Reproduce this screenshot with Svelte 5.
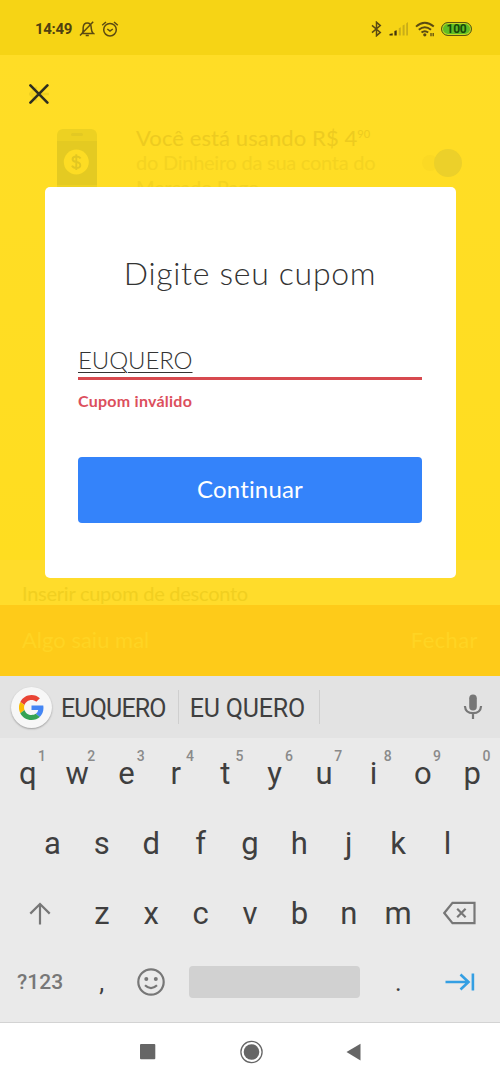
<script lang="ts">
	interface Key {
		label: string;
		hint?: string;
	}

	const toKeys = (letters: string): Key[] => letters.split('').map((label) => ({ label }));

	const topRow: Key[] = 'qwertyuiop'
		.split('')
		.map((label, i) => ({ label, hint: String((i + 1) % 10) }));
	const middleRow = toKeys('asdfghjkl');
	const bottomRow = toKeys('zxcvbnm');
	const suggestions = ['EUQUERO', 'EU QUERO'];

	let coupon = $state('EUQUERO');
	let invalid = $state(true);

	function press(label: string) {
		coupon += label.toUpperCase();
		invalid = false;
	}

	function erase() {
		coupon = coupon.slice(0, -1);
		invalid = false;
	}
</script>

{#snippet letterKey(key: Key)}
	<button class="key" onclick={() => press(key.label)}>
		{key.label}
		{#if key.hint}<span class="hint">{key.hint}</span>{/if}
	</button>
{/snippet}

<div class="screen">
	<header class="status">
		<span class="time">14:49</span>
		<svg class="bell" width="16" height="16" viewBox="0 0 16 16">
			<path d="M3.2 12.2C4.6 10.6 4 8.8 4.2 6.4C4.5 3.6 6 2 8.2 2S12 3.6 12.2 6.4C12.4 9 12.2 10.8 14.4 12.5H3M6.7 14.4H9.8M14.2 .8L1 14.6" />
		</svg>
		<svg class="alarm" width="18" height="16" viewBox="0 0 18 16">
			<circle cx="9" cy="8.7" r="6.3" />
			<path d="M1.2 4.2L5 1M16.8 4.2L13 1M6.3 8L9 10L11.8 8" />
		</svg>
		<div class="indicators">
			<svg width="11" height="16" viewBox="0 0 11 16">
				<path d="M1 4.4L9.3 11.4L5.5 14.8V1.2L9.3 4.6L1 11.6" />
			</svg>
			<svg class="bars" width="20" height="16" viewBox="0 0 20 16">
				<path d="M.5 14.5V13L3.7 12.2V14.5ZM5.4 14.5V10L7.7 9.2V14.5Z" />
				<path class="off" d="M9.8 14.5V7.2L11.8 6.2V14.5ZM13.6 14.5V4.6L15.6 3.4V14.5ZM17.2 14.5V2.5L19 1V14.5Z" />
			</svg>
			<svg class="wifi" width="20" height="16" viewBox="0 0 20 16">
				<path d="M1 5.6Q9.8-2 18.8 5.6M3.8 8.7Q9.8 3.6 16 8.7M6.5 11.5Q9.8 8.8 13.2 11.5" />
				<path class="small" d="M16 12V15.2M18.2 12V15.2" />
				<circle cx="9.8" cy="13.8" r="1.6" />
			</svg>
			<span class="battery">100</span>
		</div>
	</header>

	<main>
		<!-- Dimmed checkout page behind the dialog -->
		<div class="behind" aria-hidden="true">
			<div class="money">
				<svg width="40" height="70" viewBox="0 0 40 70">
					<rect width="40" height="70" rx="6" fill="#edd122" />
					<path d="M0 12H40V56H0Z" fill="#e4ca22" />
					<rect x="14" y="4" width="12" height="3" rx="1.5" fill="#e3c923" />
					<circle cx="19.3" cy="33" r="12.5" fill="#fddc24" />
					<path d="M23.5 29.5Q22.5 27.5 19.3 27.5Q15.6 27.5 15.6 30.2Q15.6 32.3 19.3 33Q23.3 33.7 23.3 36.2Q23.3 39 19.3 39Q16 39 15 36.6M19.3 25.3V41" fill="none" stroke="#e2c722" stroke-width="1.9" />
				</svg>
				<p>
					<span class="lead">Você está usando R$ 4<sup>90</sup></span>
					<span>do Dinheiro da sua conta do</span>
					<span>Mercado Pago.</span>
				</p>
				<i class="toggle"></i>
			</div>
			<div class="insert">Inserir cupom de desconto</div>
			<div class="snackbar"><span>Algo saiu mal</span><span class="dismiss">Fechar</span></div>
		</div>

		<button class="close" aria-label="Fechar">
			<svg width="20" height="20" viewBox="0 0 20 20">
				<path class="ghost" d="M1 10L7 4M1 10L7 16M1 10H19" />
				<path d="M1.4 1.4L18.4 18.6M18.4 1.4L1.4 18.6" />
			</svg>
		</button>

		<section class="dialog">
			<h1>Digite seu cupom</h1>
			<div class="field" class:invalid><span>{coupon}</span></div>
			<p class="error">{invalid ? 'Cupom inválido' : ''}</p>
			<button class="continue" onclick={() => (invalid = true)}><span>Continuar</span></button>
		</section>
	</main>

	<section class="keyboard">
		<div class="suggestions">
			<span class="google">
				<svg width="25" height="25" viewBox="0 0 48 48">
					<path fill="#e94435" d="M24 9.5c3.5 0 6.7 1.2 9.2 3.6l6.9-6.9C35.9 2.4 30.5 0 24 0 14.6 0 6.5 5.4 2.6 13.2l8 6.2C12.4 13.7 17.7 9.5 24 9.5z" />
					<path fill="#4486f4" d="M47 24.6c0-1.6-.2-3.2-.4-4.6H24v9h12.9c-.6 3-2.2 5.5-4.7 7.2l7.7 6C44.4 38 47 31.8 47 24.6z" />
					<path fill="#fabc05" d="M10.5 28.6a14.5 14.5 0 0 1 0-9.2l-8-6.2a24 24 0 0 0 0 21.6z" />
					<path fill="#34a353" d="M24 48c6.5 0 11.9-2.1 15.9-5.8l-7.7-6c-2.2 1.5-4.9 2.3-8.2 2.3-6.3 0-11.6-4.2-13.5-9.9l-8 6.2C6.5 42.6 14.6 48 24 48z" />
				</svg>
			</span>
			{#each suggestions as word}
				<button class="word" onclick={() => (coupon = word)}>{word}</button>
			{/each}
			<svg class="mic" width="20" height="26" viewBox="0 0 20 26">
				<rect x="6.2" y="0.5" width="7.6" height="16" rx="3.8" />
				<path d="M1.9 12C2.3 16.9 5.6 19.2 10 19.2S17.7 16.9 18.1 12M10 19V25" />
			</svg>
		</div>

		<div class="row">
			{#each topRow as key}{@render letterKey(key)}{/each}
		</div>
		<div class="row indented">
			{#each middleRow as key}{@render letterKey(key)}{/each}
		</div>
		<div class="row">
			<button class="key side" aria-label="Shift">
				<svg width="22" height="23" viewBox="0 0 22 23">
					<path d="M1.3 11.6L11 2L20.7 11.6M11 2V22.5" />
				</svg>
			</button>
			{#each bottomRow as key}{@render letterKey(key)}{/each}
			<button class="key side" aria-label="Apagar" onclick={erase}>
				<svg width="33" height="24" viewBox="0 0 33 24">
					<path d="M9.5 1.8H31.5V22.2H9.5L1.3 12ZM14.2 7.8L22.6 16.2M22.6 7.8L14.2 16.2" />
				</svg>
			</button>
		</div>
		<div class="row last">
			<button class="key side symbols">?123</button>
			<button class="key punctuation">,</button>
			<button class="key" aria-label="Emoji">
				<svg width="28" height="28" viewBox="0 0 28 28">
					<circle cx="14" cy="14" r="12.7" />
					<path d="M8 17.3Q14 23 20 17.3" />
					<circle class="eye" cx="9.3" cy="11" r="2" />
					<circle class="eye" cx="18.8" cy="11" r="2" />
				</svg>
			</button>
			<button class="key space" aria-label="Espaço"><i></i></button>
			<button class="key punctuation">.</button>
			<button class="key side enter" aria-label="Avançar">
				<svg width="32" height="20" viewBox="0 0 32 20">
					<path d="M1.5 10H24M16.5 2.5L24.5 10L16.5 17.5M28.9 1.5V18.5" />
				</svg>
			</button>
		</div>
	</section>

	<nav>
		<svg width="500" height="59" viewBox="0 0 500 59">
			<rect x="140" y="21" width="15.3" height="15.3" rx="1" />
			<circle cx="251.5" cy="29" r="10.6" class="ring" />
			<circle cx="251.5" cy="29" r="7.8" />
			<path d="M346.5 29L360.5 20.8V37.4Z" />
		</svg>
	</nav>
</div>

<style>
	:global(body) {
		margin: 0;
	}

	.screen {
		width: 500px;
		height: 1082px;
		display: flex;
		flex-direction: column;
		overflow: hidden;
		font-family: Roboto, sans-serif;
		background: #fff;
	}

	button {
		padding: 0;
		border: 0;
		background: none;
		font: inherit;
		color: inherit;
	}

	svg {
		display: block;
		flex: none;
	}

	.status {
		flex: none;
		box-sizing: border-box;
		display: flex;
		align-items: center;
		height: 55px;
		padding: 3px 28px 0 35px;
		background: #f6d415;
		color: #4f4010;
	}

	.status svg {
		fill: none;
		stroke: #5b4a12;
		stroke-width: 1.5;
	}

	.time {
		width: 44px;
		font-size: 15px;
		font-weight: 700;
		letter-spacing: -0.3px;
	}

	.alarm {
		margin-left: 6px;
	}

	.indicators {
		display: flex;
		align-items: center;
		margin-left: auto;
	}

	.indicators .bars {
		margin: 0 6px 0 7px;
		fill: #40330f;
		stroke: none;
	}

	.bars .off {
		fill: #c9ad18;
	}

	.indicators .wifi {
		margin-right: 6px;
		stroke-width: 1.9;
	}

	.wifi circle {
		fill: #5b4a12;
		stroke: none;
	}

	.wifi .small {
		stroke-width: 1.3;
	}

	.battery {
		box-sizing: border-box;
		width: 31px;
		height: 14px;
		border: 1.5px solid #5d5513;
		border-radius: 7px;
		background: #62bd24;
		box-shadow: inset 0 0 0 1px #c5d922;
		color: #174809;
		font-size: 12px;
		font-weight: 700;
		line-height: 12px;
		letter-spacing: -0.3px;
		text-align: center;
	}

	main {
		position: relative;
		flex: none;
		height: 621px;
		font-family: Lato, sans-serif;
	}

	.behind {
		position: absolute;
		inset: 0;
		display: flex;
		flex-direction: column;
		background: #ffdd24;
		color: #f1cf20;
	}

	.money {
		display: flex;
		flex: 1;
		padding: 74px 38px 0 57px;
		background: linear-gradient(#ffdd26, #ffdd20);
	}

	.money p {
		display: flex;
		flex-direction: column;
		flex: 1;
		margin: -4px 0 0 39px;
		font-size: 20px;
		font-weight: 400;
		line-height: 25px;
		letter-spacing: -0.25px;
		white-space: nowrap;
		color: #f4d321;
	}

	.money .lead {
		font-size: 22px;
		letter-spacing: 0.1px;
		color: #edcb20;
	}

	sup {
		font-size: 11px;
		line-height: 0;
		vertical-align: 8px;
	}

	.toggle {
		width: 28px;
		height: 28px;
		margin-top: 20px;
		border-radius: 50%;
		background: #ecd02a;
		box-shadow: -18px 0 0 -6px #fbd924;
	}

	.insert {
		box-sizing: border-box;
		height: 45px;
		padding: 21px 22px 0;
		background: #ffdc2b;
		font-size: 20px;
		line-height: 24px;
		letter-spacing: -0.25px;
		white-space: nowrap;
	}

	.snackbar {
		box-sizing: border-box;
		display: flex;
		justify-content: space-between;
		height: 71px;
		padding: 21px 22px 0;
		background: #fecb19;
		color: #ffd423;
		font-size: 22px;
		line-height: 28px;
	}

	.dismiss {
		letter-spacing: 0.4px;
	}

	.close {
		position: relative;
		display: block;
		padding: 29px 0 0 29px;
	}

	.close path {
		fill: none;
		stroke: #2f2e20;
		stroke-width: 2.6;
		stroke-linecap: round;
	}

	.close .ghost {
		stroke: #efd022;
	}

	.dialog {
		position: relative;
		box-sizing: border-box;
		width: 411px;
		height: 391px;
		margin: 83px 0 0 44.5px;
		padding: 66px 33.5px 0;
		border-radius: 5px;
		background: #fff;
		color: #333;
	}

	h1 {
		margin: 0;
		font-size: 32px;
		font-weight: 300;
		line-height: 40px;
		letter-spacing: 0.7px;
		text-align: center;
		white-space: nowrap;
	}

	.field {
		box-sizing: border-box;
		height: 34px;
		margin-top: 53px;
		border-bottom: 3px solid #555;
		font-size: 24px;
		font-weight: 300;
		line-height: 27px;
		letter-spacing: -0.1px;
		text-decoration: underline;
		text-decoration-thickness: 1px;
		text-underline-offset: 3px;
	}

	.field.invalid {
		border-color: #d7494f;
	}

	.error {
		height: 20px;
		margin: 11px 0 0;
		color: #dc4f5d;
		font-size: 16px;
		font-weight: 700;
		line-height: 20px;
		letter-spacing: 0.25px;
	}

	.continue {
		width: 100%;
		height: 66px;
		margin-top: 46px;
		border-radius: 4px;
		background: #3483fa;
		color: #fff;
		font-size: 24px;
		line-height: 64px;
		letter-spacing: 0.15px;
	}

	.continue span {
		display: block;
		height: 66px;
	}

	.keyboard {
		flex: none;
		box-sizing: border-box;
		height: 347px;
		border-bottom: 1px solid #d3d3d3;
		background: #eaeaea;
		color: #3f3f3f;
	}

	.suggestions {
		box-sizing: border-box;
		display: flex;
		align-items: center;
		height: 62px;
		padding: 0 17px 0 11px;
		background: #e3e3e3;
	}

	.google {
		display: flex;
		align-items: center;
		justify-content: center;
		width: 41px;
		height: 41px;
		border-radius: 50%;
		background: #f7f7f7;
		box-shadow: 0 1px 2px rgba(0, 0, 0, 0.3);
	}

	.word {
		height: 34px;
		padding: 0 12px 0 9px;
		border-right: 1px solid #cfcfcf;
		font-size: 25px;
		line-height: 37px;
		letter-spacing: -0.85px;
		white-space: nowrap;
	}

	.word + .word {
		padding: 0 14px 0 11px;
		letter-spacing: -0.2px;
	}

	.mic {
		margin-left: auto;
		fill: #777;
	}

	.mic path {
		fill: none;
		stroke: #777;
		stroke-width: 2.2;
	}

	.row {
		display: flex;
		height: 70px;
		padding: 0 3px;
	}

	.row.indented {
		padding: 0 27.7px;
	}

	.row.last {
		height: 68px;
	}

	.key {
		position: relative;
		display: flex;
		flex: 0 0 49.4px;
		align-items: center;
		justify-content: center;
		font-size: 31px;
	}

	.key svg {
		fill: none;
		stroke: #777;
		stroke-width: 2.2;
	}

	.hint {
		position: absolute;
		top: 9px;
		right: 6.5px;
		color: #8a8a8a;
		font-size: 14px;
		font-weight: 500;
		line-height: 18px;
	}

	.side {
		flex: 1;
	}

	.symbols {
		color: #777;
		font-size: 21px;
		font-weight: 500;
	}

	.punctuation {
		font-size: 25px;
	}

	.key .eye {
		fill: #777;
		stroke: none;
	}

	.space {
		flex-basis: 197.6px;
	}

	.space i {
		width: 171px;
		height: 32px;
		border-radius: 4px;
		background: #d1d1d1;
	}

	.enter svg {
		stroke: #349fe3;
		stroke-width: 2.6;
	}

	nav svg {
		fill: #666;
	}

	nav .ring {
		fill: none;
		stroke: #666;
		stroke-width: 1.3;
	}
</style>
